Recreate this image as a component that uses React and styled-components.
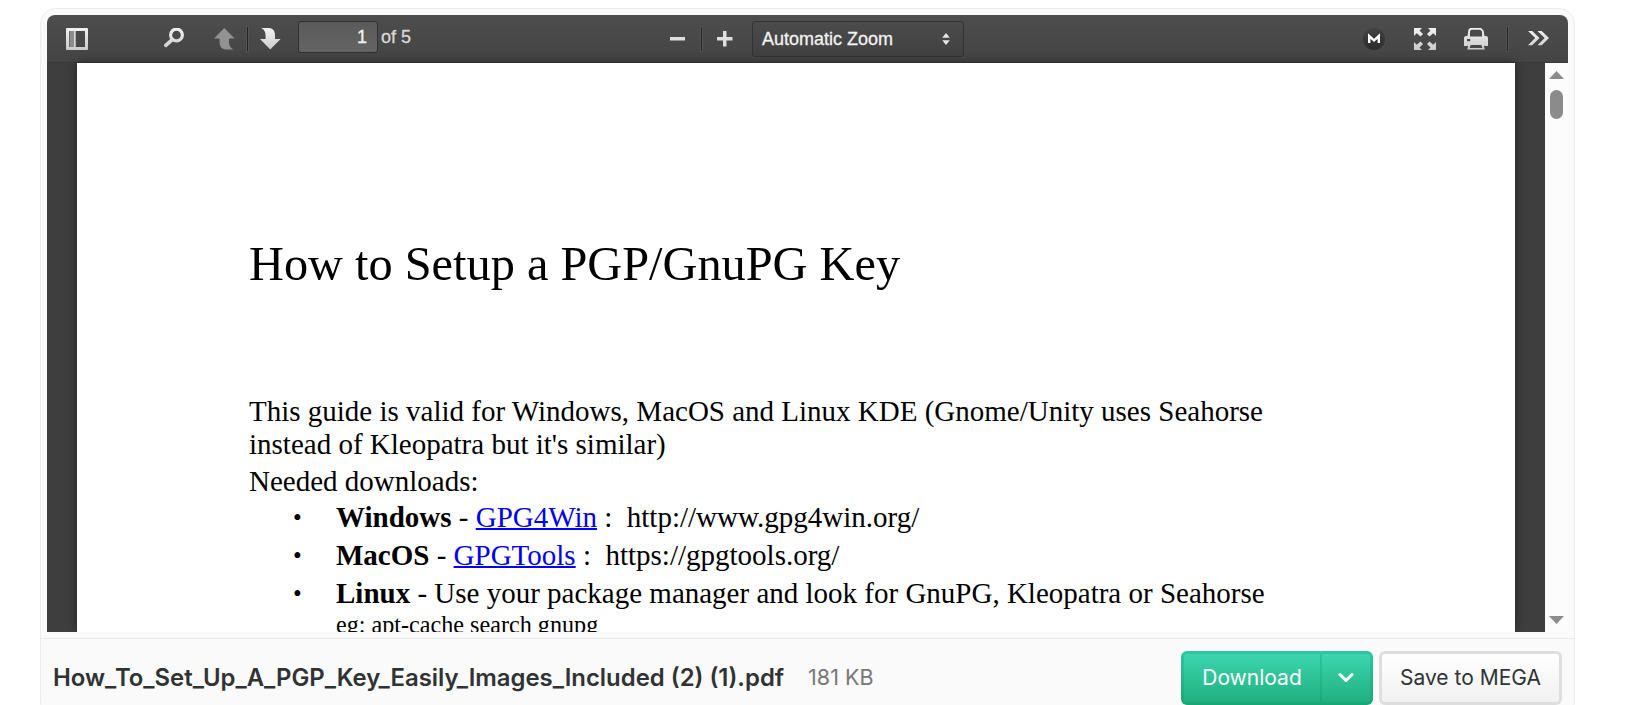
import React from 'react';
// Styles
import styled, { createGlobalStyle } from 'styled-components';

const downloads = [
    { os: 'Windows', link: 'GPG4Win', url: 'http://www.gpg4win.org/' },
    { os: 'MacOS', link: 'GPGTools', url: 'https://gpgtools.org/' },
];

// Shared fill for the toolbar icons
const IconGradient = () => (
    <HiddenSvg width="0" height="0">
        <defs>
            <linearGradient id="light" x1="0" y1="0" x2="0" y2="22" gradientUnits="userSpaceOnUse">
                <stop offset="0" stopColor="#f2f2f2" />
                <stop offset="1" stopColor="#cacaca" />
            </linearGradient>
            <linearGradient id="dark" x1="0" y1="0" x2="0" y2="22" gradientUnits="userSpaceOnUse">
                <stop offset="0" stopColor="#424242" />
                <stop offset="1" stopColor="#2b2b2b" />
            </linearGradient>
        </defs>
    </HiddenSvg>
);

const SidebarIcon = () => (
    <svg width="22" height="22" viewBox="0 0 22 22">
        <path fill="url(#light)" fillRule="evenodd" d="M1 0h20a1 1 0 0 1 1 1v20a1 1 0 0 1-1 1H1a1 1 0 0 1-1-1V1a1 1 0 0 1 1-1zM3 3v16h16V3z" />
        <path fill="#8d8d8d" d="M3.500 3H8v16H3.500z" />
        <path fill="#dadada" d="M8 3h1.700v16H8z" />
    </svg>
);

const SearchIcon = () => (
    <svg width="20" height="22" viewBox="0 0 20 22">
        <g fill="none" stroke="url(#light)">
            <circle cx="12.500" cy="7" r="5.900" strokeWidth="3.200" />
            <path d="M8 11.800L1.800 17.400" strokeWidth="3.600" strokeLinecap="round" />
        </g>
    </svg>
);

const UpIcon = () => (
    <svg width="21" height="22" viewBox="0 0 21 22">
        <path fill="#929292" d="M10.300 0L20.600 10.500H15V14c0 3.500 1.500 6 4.600 7.500H13C8 21.500 5.600 19 5.600 14v-3.500H0z" />
    </svg>
);

const DownIcon = () => (
    <svg width="21" height="22" viewBox="0 0 21 22">
        <path fill="url(#light)" d="M10.300 21.500L0 11h5.600V7.500C5.600 4 4.200 1.500 1.200 0h6.600C13 0 15 2.500 15 7.500V11h5.600z" />
    </svg>
);

const FullscreenIcon = () => (
    <svg width="22" height="22" viewBox="0 0 22 22">
        <g fill="url(#light)">
            <path d="M0 0h8L5.500 2.500 9 6 6.500 8.500 2.700 5.200 0 8z" />
            <path d="M22 0v8l-2.700-2.800-3.800 3.300L13 6l3.500-3.500L14 0z" />
            <path d="M0 22v-8l2.700 2.800 3.800-3.300L9 16l-3.500 3.500L8 22z" />
            <path d="M22 22h-8l2.500-2.500L13 16l2.500-2.500 3.800 3.300L22 14z" />
        </g>
    </svg>
);

const PrintIcon = () => (
    <svg width="24" height="22" viewBox="0 0 24 22">
        <path fill="url(#light)" fillRule="evenodd" d="M6 0h11l2.500 2.500L20.500 8H22a2 2 0 0 1 2 2v8h-4.200l1 3.500H3.200l1-3.500H0v-8a2 2 0 0 1 2-2h1.500l1-6.500zM7.300 1.700L6 3v5.500h12V3.400l-1.700-1.700zM3 11v2.300h3.200V11zM6.700 17L5.600 20h12.800l-1.100-3z" />
    </svg>
);

const MoreIcon = () => (
    <svg width="22" height="17" viewBox="0 0 22 17">
        <path fill="url(#light)" d="M0 1h4.200l7.300 7-7.300 7.300H0L7.200 8z" />
        <path fill="url(#light)" d="M9.500 1h4.200L21 8l-7.300 7.300H9.500L16.700 8z" />
    </svg>
);

const MegaIcon = () => (
    <svg width="22" height="22" viewBox="0 0 22 22">
        <circle cx="11" cy="11" r="11" fill="url(#dark)" />
        <path d="M6.200 15V8L11 12.400 15.800 8v7" fill="none" stroke="#fff" strokeWidth="2.400" />
    </svg>
);

const App = () => {
    return (
        <>
            <GlobalStyle />
            <IconGradient />
            <Frame>
                <Viewer>
                    <Toolbar>
                        <LeftTools>
                            <Tool $width={22} aria-label="Toggle Sidebar"><SidebarIcon /></Tool>
                            <Tool $width={20} $gap={76} aria-label="Find"><SearchIcon /></Tool>
                            <Tool $width={21} $gap={30} aria-label="Previous"><UpIcon /></Tool>
                            <Divider $gap={11} />
                            <Tool $width={21} $gap={11} aria-label="Next"><DownIcon /></Tool>
                            <PageInput defaultValue="1" />
                            <PageCount>of 5</PageCount>
                        </LeftTools>

                        <ZoomTools>
                            <Tool $width={15} aria-label="Zoom Out">
                                <svg width="15" height="16"><path fill="#dedede" d="M0 6h15v3.500H0z" /></svg>
                            </Tool>
                            <Divider $gap={15} />
                            <Tool $width={16} $gap={14} aria-label="Zoom In">
                                <svg width="16" height="16"><path fill="#dedede" d="M0 6h6V0h3.500v6h6v3.500h-6v6H6v-6H0z" /></svg>
                            </Tool>
                            <ZoomSelect>
                                <span>Automatic Zoom</span>
                                <svg width="8" height="12"><path fill="#e6e6e6" d="M4 0l3.800 4.800H.2zM4 12L.2 7.200h7.600z" /></svg>
                            </ZoomSelect>
                        </ZoomTools>

                        <RightTools>
                            <Tool $width={22} aria-label="MEGA"><MegaIcon /></Tool>
                            <Tool $width={22} $gap={29} aria-label="Presentation Mode"><FullscreenIcon /></Tool>
                            <Tool $width={24} $gap={28} aria-label="Print"><PrintIcon /></Tool>
                            <Divider $gap={18} />
                            <Tool $width={22} $gap={19} aria-label="Tools"><MoreIcon /></Tool>
                        </RightTools>
                    </Toolbar>

                    <Document>
                        <Page>
                            <Title>How to Setup a PGP/GnuPG Key</Title>
                            <Text>
                                This guide is valid for Windows, MacOS and Linux KDE (Gnome/Unity uses Seahorse<br />
                                instead of Kleopatra but it's similar)
                            </Text>
                            <Text>Needed downloads:</Text>
                            <List>
                                {
                                    downloads.map((item) => (
                                        <Item key={item.os}>
                                            <b>{item.os}</b> - <a href="#">{item.link}</a> :{'  '}{item.url}
                                        </Item>
                                    ))
                                }
                                <Item>
                                    <b>Linux</b> - Use your package manager and look for GnuPG, Kleopatra or Seahorse
                                </Item>
                            </List>
                            <Note>eg: apt-cache search gnupg</Note>
                        </Page>
                        <ScrollBar>
                            <svg width="15" height="8"><path fill="#8b8b8b" d="M7.500 0L15 8H0z" /></svg>
                            <Thumb />
                            <svg width="15" height="8"><path fill="#8b8b8b" d="M7.500 8L0 0h15z" /></svg>
                        </ScrollBar>
                    </Document>
                </Viewer>

                <Footer>
                    <FileName>How_To_Set_Up_A_PGP_Key_Easily_Images_Included (2) (1).pdf</FileName>
                    <FileSize>181 KB</FileSize>
                    <DownloadGroup>
                        <DownloadButton>Download</DownloadButton>
                        <DownloadMore aria-label="More">
                            <svg width="16" height="11"><path d="M2 2.500l6 6 6-6" fill="none" stroke="#fff" strokeWidth="3" strokeLinecap="round" strokeLinejoin="round" /></svg>
                        </DownloadMore>
                    </DownloadGroup>
                    <SaveButton>Save to MEGA</SaveButton>
                </Footer>
            </Frame>
        </>
    );
};

// Styles
const GlobalStyle = createGlobalStyle`
  * {
    box-sizing: border-box;
  }

  body {
    margin: 0;
    background: white;
    overflow: hidden;
  }

  svg {
    display: block;
    flex: none;
  }

  button {
    padding: 0;
    border: 0;
    background: none;
  }
`;

const HiddenSvg = styled.svg`
  position: absolute;
`;

const Frame = styled.div`
  width: 1535px;
  height: 710px;
  margin: 8px 0 0 40px;
  border: 1px solid #ededed;
  border-radius: 16px;
  background: #fafafa;
`;

const Viewer = styled.div`
  width: 1521px;
  height: 617px;
  margin: 6px 0 0 6px;
  border-radius: 8px 8px 0 0;
  overflow: hidden;
`;

const Toolbar = styled.div`
  height: 48px;
  display: grid;
  grid-template-columns: 623px 1fr auto;
  background: linear-gradient(#4d4d4d, #444444);
  border-bottom: 1px solid #393939;
  font-family: "Liberation Sans", Arial, sans-serif;
  font-size: 18px;
  -webkit-text-stroke: 0.3px;
`;

const Tools = styled.div`
  display: flex;
  align-items: center;
`;

const LeftTools = styled(Tools)`
  padding-left: 19px;
`;

const ZoomTools = styled(Tools)``;

const RightTools = styled(Tools)`
  padding-right: 18px;
`;

const Tool = styled.button`
  display: flex;
  width: ${({ $width }) => $width}px;
  margin-left: ${({ $gap = 0 }) => $gap}px;
`;

const Divider = styled.div`
  width: 3px;
  height: 26px;
  margin-left: ${({ $gap }) => $gap}px;
  background: #232323;
  border: 1px solid #545454;
`;

const PageInput = styled.input`
  width: 80px;
  height: 32px;
  margin: -3px 0 0 17px;
  padding: 0 10px 0 0;
  border: 1px solid #303030;
  border-radius: 3px;
  background: linear-gradient(#5a5a5a, #646464);
  color: #f2f2f2;
  font: inherit;
  text-align: right;
`;

const PageCount = styled.span`
  margin: -2px 0 0 3px;
  color: #d9d9d9;
`;

const ZoomSelect = styled.div`
  width: 212px;
  height: 36px;
  margin-left: 19px;
  padding: 0 13px 0 9px;
  display: flex;
  align-items: center;
  justify-content: space-between;
  border: 1px solid #333;
  border-radius: 3px;
  background: linear-gradient(#4b4b4b, #414141);
  color: #f2f2f2;

  span {
    padding-top: 2px;
  }
`;

const Document = styled.div`
  height: 569px;
  padding-left: 30px;
  display: flex;
  background: #3e3e3e;
`;

const Page = styled.div`
  width: 1438px;
  padding: 174px 0 0 172px;
  background: white;
  box-shadow: 0 0 10px rgba(0, 0, 0, 0.45);
  color: black;
  font-family: "Liberation Serif", "Times New Roman", serif;
  font-size: 29px;
  line-height: 33px;
  white-space: nowrap;
`;

const Title = styled.h1`
  margin: 0 0 104px;
  font-size: 48.330px;
  font-weight: 400;
  line-height: 54px;
`;

const Text = styled.p`
  margin: 0 0 4px;
`;

const List = styled.ul`
  margin: -4px 0 0;
  padding: 0;
  list-style: none;
  line-height: 38px;
`;

const Item = styled.li`
  display: flex;
  white-space: pre;

  &::before {
    content: "•";
    width: 43px;
    margin-left: 44px;
    padding-top: 1px;
    font-size: 25px;
    line-height: 37px;
  }

  a {
    color: #0000f5;
    text-decoration-thickness: 2px;
  }
`;

const Note = styled.p`
  margin: -1px 0 0;
  padding-left: 87px;
  font-size: 24.170px;
  line-height: 27px;
`;

const ScrollBar = styled.div`
  width: 23px;
  margin-left: auto;
  padding: 8px 0;
  display: flex;
  flex-direction: column;
  align-items: center;
  background: #fcfcfc;

  svg:last-child {
    margin-top: auto;
  }
`;

const Thumb = styled.div`
  width: 13px;
  height: 29px;
  margin-top: 11px;
  border-radius: 7px;
  background: #8b8b8b;
`;

const Footer = styled.div`
  margin-top: 6px;
  padding: 12px 12px 0;
  display: flex;
  align-items: center;
  border-top: 1px solid #ebebeb;
  font-family: Inter, sans-serif;
  font-size: 21px;
  white-space: nowrap;
`;

const FileName = styled.span`
  padding-bottom: 2px;
  color: #303233;
  font-size: 23.900px;
  font-weight: 600;
`;

const FileSize = styled.span`
  margin-left: 24px;
  padding-bottom: 2px;
  color: #777;
  font-size: 21.500px;
`;

const DownloadGroup = styled.div`
  height: 54px;
  margin-left: auto;
  display: flex;
  border: 3px solid rgba(0, 140, 100, 0.22);
  border-radius: 6px;
  background: linear-gradient(#3dd8b2, #1fae7c) border-box;
`;

const DownloadButton = styled.button`
  width: 138px;
  padding-bottom: 2px;
  border-right: 2px solid rgba(0, 140, 100, 0.22);
  color: white;
  font: inherit;
`;

const DownloadMore = styled.button`
  width: 48px;
  padding-bottom: 2px;
  display: flex;
  align-items: center;
  justify-content: center;
`;

const SaveButton = styled.button`
  width: 183px;
  height: 54px;
  margin-left: 6px;
  padding-bottom: 2px;
  border: 3px solid #dedede;
  border-radius: 6px;
  background: linear-gradient(#ffffff, #f1f1f1);
  color: #303233;
  font: inherit;
`;

export default App;
